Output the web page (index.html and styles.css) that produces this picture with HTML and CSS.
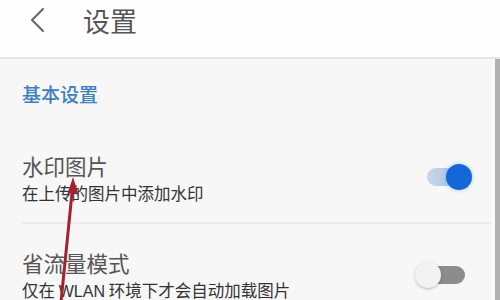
FILE: index.html
```html
<!DOCTYPE html>
<html lang="zh">
<head>
<meta charset="utf-8">
<link rel="stylesheet" href="styles.css">
</head>
<body>
<div class="screen">
  <header class="header">
    <svg class="back" width="16" height="26" viewBox="0 0 16 26"><path d="M14 2 L3 13 L14 24" fill="none" stroke="#666" stroke-width="2" stroke-linecap="round" stroke-linejoin="round"/></svg>
    <h1 class="title">设置</h1>
  </header>
  <div class="main">
    <div class="content">
      <div class="section-title">基本设置</div>
      <div class="row first">
        <div class="text">
          <div class="row-title">水印图片</div>
          <div class="row-sub">在上传的图片中添加水印</div>
        </div>
        <div class="toggle on"><span class="track"></span><span class="knob"></span></div>
      </div>
      <div class="divider"></div>
      <div class="row">
        <div class="text">
          <div class="row-title">省流量模式</div>
          <div class="row-sub">仅在 <span class="latin">WLAN</span> 环境下才会自动加载图片</div>
        </div>
        <div class="toggle off"><span class="track"></span><span class="knob"></span></div>
      </div>
    </div>
    <div class="scrollbar"></div>
  </div>
  <svg class="annot" width="500" height="300" viewBox="0 0 500 300">
    <line x1="61" y1="302" x2="72.5" y2="188" stroke="#a3222e" stroke-width="3"/>
    <path d="M73 177 L79 196 L73 192 L67 195 Z" fill="#a3222e"/>
  </svg>
</div>
</body>
</html>
```
FILE: styles.css
```css
html, body {
  margin: 0;
  padding: 0;
}
body {
  font-family: "Noto Sans CJK SC", "Noto Sans", sans-serif;
  background: #f7f7f7;
}
.screen {
  position: relative;
  width: 500px;
  height: 300px;
  overflow: hidden;
  display: flex;
  flex-direction: column;
}
.header {
  height: 57px;
  background: #fefefe;
  border-bottom: 2px solid #e6e6e6;
  display: flex;
  align-items: center;
  padding-left: 29px;
  flex-shrink: 0;
}
.back {
  margin-top: -18px;
}
.title {
  margin: -16px 0 0 38px;
  font-size: 27px;
  line-height: 30px;
  font-weight: 400;
  color: #555;
}
.main {
  flex: 1;
  display: flex;
}
.content {
  flex: 1;
  padding-left: 22px;
}
.scrollbar {
  width: 5px;
  background: #b1b1b1;
  border-left: 2px solid #fbfbfb;
  margin-left: 2px;
}
.section-title {
  margin-top: 25px;
  font-size: 19px;
  line-height: 20px;
  color: #3a7ec6;
  font-weight: 500;
}
.row {
  display: flex;
  align-items: center;
  padding: 28px 18px 21px 0;
}
.row.first {
  padding-top: 30px;
  margin-top: 21px;
}
.text {
  flex: 1;
}
.row-title {
  font-size: 21.5px;
  line-height: 22px;
  color: #555;
}
.row-sub {
  margin-top: 8px;
  font-size: 16.5px;
  line-height: 16px;
  color: #333;
  white-space: nowrap;
}
.latin {
  font-family: "Liberation Sans", sans-serif;
  font-size: 16px;
}
.divider {
  height: 2px;
  background: #ececec;
}
.toggle {
  position: relative;
  width: 58px;
  height: 28px;
  margin-top: -2px;
}
.track {
  position: absolute;
  left: 12px;
  right: 8px;
  top: 5px;
  height: 18px;
  border-radius: 9px;
}
.knob {
  position: absolute;
  top: 1px;
  width: 26px;
  height: 26px;
  border-radius: 50%;
}
.on .track {
  background: linear-gradient(90deg, #c9d6e4, #9cc3ee);
}
.on .knob {
  right: 1px;
  background: #1467d8;
  box-shadow: 0 0 4px rgba(20, 103, 216, 0.35);
}
.off .track {
  background: #8c8c8c;
}
.off .knob {
  left: 0;
  background: #f2f2f2;
  box-shadow: 0 1px 3px rgba(0, 0, 0, 0.25);
}
.annot {
  position: absolute;
  left: 0;
  top: 0;
  pointer-events: none;
}
```
